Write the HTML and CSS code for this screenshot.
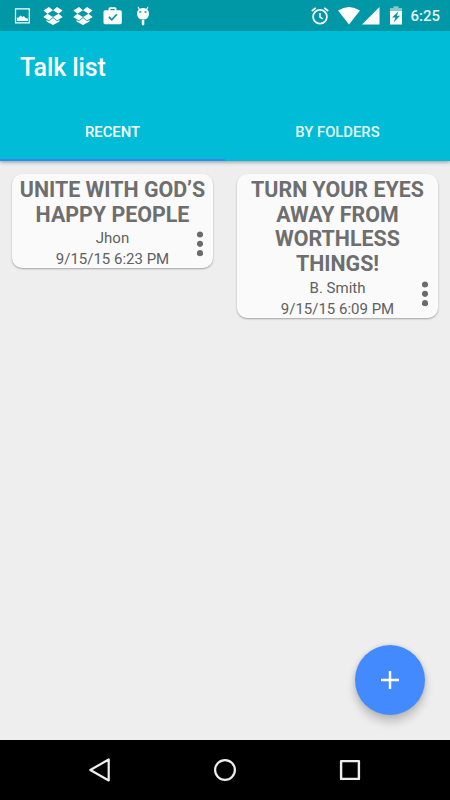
FILE: index.html
```html
<!DOCTYPE html>
<html lang="en">
<head>
<meta charset="utf-8">
<title>Talk list</title>
<link rel="stylesheet" href="styles.css">
</head>
<body>
<div class="screen">
  <div class="status">
    <div class="notifications">
      <svg width="16" height="16" viewBox="0 0 16 16"><path fill="none" stroke="#fff" stroke-width="1.2" d="M1.500.8h13.800v14H1.500z"/><path fill="#fff" d="M2.900 13V9.500L4.400 9.800l2-2.300L8.400 9l1.500-1 1.500 2 2.500.5V13z"/></svg>
      <svg width="20" height="20" viewBox="0 0 20 20"><path fill="#fff" d="M6 1l4 3.300L4.500 7.700.300 4.500zM14 1l5.700 3.500-4.200 3.200L10 4.300zM.300 11l4.200-3.300L10 11l-4 3.600zM19.700 11l-4.200-3.300L10 11l4 3.600zM10 12l4 3.300 2.500-1.200v1.500L10 19l-6.500-3.400v-1.500L6 15.300z"/></svg>
      <svg width="20" height="20" viewBox="0 0 20 20"><path fill="#fff" d="M6 1l4 3.300L4.500 7.700.300 4.500zM14 1l5.700 3.500-4.200 3.200L10 4.300zM.300 11l4.200-3.300L10 11l-4 3.600zM19.700 11l-4.200-3.300L10 11l4 3.600zM10 12l4 3.300 2.500-1.200v1.500L10 19l-6.500-3.400v-1.500L6 15.300z"/></svg>
      <svg width="20" height="18" viewBox="0 0 20 18"><path fill="#fff" fill-rule="evenodd" d="M5.500 3.200V1.700Q5.500.2 7 .2h5q1.500 0 1.500 1.500v1.500h3.700q1.600 0 1.600 1.600v10.800q0 1.600-1.600 1.600H2.100q-1.600 0-1.600-1.600V4.800q0-1.600 1.600-1.600zm2 0h4V1.900h-4z"/><path fill="none" stroke="#0097a7" stroke-width="1.700" d="M5.800 9.800l3 3 5-5.500"/></svg>
      <svg width="14" height="20" viewBox="0 0 14 20"><path fill="#fff" d="M2.200.5l1.500 2.300Q7 1.200 10.300 2.800L11.800.5l.6.400-1.100 2.500Q13.200 5 13 8q-.3 5.500-6 5.500T1 8q-.2-3 1.700-4.600L1.600.9zM5.800 14h2.500v4.500L7 19.800 5.800 18.500z"/><path stroke="#0097a7" stroke-width="1.300" d="M3.300 6h2M8.500 6h2"/></svg>
    </div>
    <div class="system">
      <svg class="alarm" width="18" height="18" viewBox="0 0 18 18" fill="none" stroke="#fff"><circle cx="9" cy="9.800" r="6.900" stroke-width="1.700"/><path stroke-width="1.500" d="M9 6v4l3 2"/><path stroke-width="1.700" d="M.8 4L4.800.8M13.200.8l4 3.200"/></svg>
      <svg class="wifi" width="22" height="18" viewBox="0 0 22 18"><path fill="#fff" d="M0 3.500Q11-3.500 22 3.500L11 17.500z"/></svg>
      <svg class="cell" width="18" height="18" viewBox="0 0 18 18"><path fill="#fff" d="M17.500 0v17.500H0z"/></svg>
      <svg class="battery" width="12" height="19" viewBox="0 0 12 19"><path fill="#80cbd3" d="M3.500.3h5v1.700H12v3H0V2h3.500z"/><path fill="#fff" d="M0 5h12v13.500H0z"/><path fill="#0097a7" d="M8.500 5.200L2 11.500h3.500L3.600 16.500 10 9.800H6.800z"/></svg>
      <span class="clock">6:25</span>
    </div>
  </div>
  <header class="appbar">
    <h1>Talk list</h1>
    <nav class="tabs">
      <div class="tab active">RECENT</div>
      <div class="tab">BY FOLDERS</div>
    </nav>
  </header>
  <main class="content">
    <article class="card">
      <h2>UNITE WITH GOD’S HAPPY PEOPLE</h2>
      <p>Jhon</p>
      <p>9/15/15 6:23 PM</p>
      <svg class="more" width="6" height="26" viewBox="0 0 6 26" fill="#6b6b6b"><circle cx="3" cy="3.500" r="3.100"/><circle cx="3" cy="12.800" r="3.100"/><circle cx="3" cy="22.200" r="3.100"/></svg>
    </article>
    <article class="card">
      <h2>TURN YOUR EYES AWAY FROM WORTHLESS THINGS!</h2>
      <p>B. Smith</p>
      <p>9/15/15 6:09 PM</p>
      <svg class="more" width="6" height="26" viewBox="0 0 6 26" fill="#6b6b6b"><circle cx="3" cy="3.500" r="3.100"/><circle cx="3" cy="12.800" r="3.100"/><circle cx="3" cy="22.200" r="3.100"/></svg>
    </article>
    <div class="fab"><svg width="18" height="18" viewBox="0 0 18 18"><path fill="#fff" d="M7.800 0h2.400v7.800H18v2.400h-7.800V18H7.800v-7.800H0V7.800h7.800z"/></svg></div>
  </main>
  <footer class="navbar">
    <svg width="26" height="26" viewBox="0 0 26 26"><path fill="none" stroke="#eee" stroke-width="2.200" stroke-linejoin="round" d="M21.700 2.500v21L3.300 13z"/></svg>
    <svg width="26" height="26" viewBox="0 0 26 26"><circle cx="13" cy="13" r="9.900" fill="none" stroke="#eee" stroke-width="2.200"/></svg>
    <svg width="26" height="26" viewBox="0 0 26 26"><path fill="none" stroke="#eee" stroke-width="2.400" stroke-linejoin="round" d="M4.100 4.100h17.800v17.800H4.100z"/></svg>
  </footer>
</div>
</body>
</html>
```
FILE: styles.css
```css
* {
  box-sizing: border-box;
}

body {
  margin: 0;
  font-family: Roboto, "Liberation Sans", sans-serif;
}

svg {
  display: block;
  flex: none;
}

.screen {
  display: flex;
  flex-direction: column;
  width: 450px;
  height: 800px;
  overflow: hidden;
  background: #eee;
}

.status {
  z-index: 2;
  display: flex;
  flex: none;
  align-items: center;
  justify-content: space-between;
  height: 31px;
  padding: 0 10px 0 14px;
  background: #0097a7;
}

.notifications {
  display: flex;
  align-items: center;
  gap: 10px;
}

.notifications svg:first-child {
  margin-right: 2.500px;
}

.notifications svg:last-child {
  margin-left: 3px;
}

.system {
  display: flex;
  align-items: center;
}

.alarm {
  margin-right: 1px;
}

.wifi {
  margin-left: 8px;
}

.cell {
  margin-left: 2px;
}

.battery {
  margin-left: 10px;
}

.clock {
  width: 30px;
  margin-left: 8px;
  padding-top: 1px;
  color: #fff;
  font-size: 15px;
  font-weight: 500;
  line-height: 20px;
  text-align: right;
  opacity: .9;
}

.appbar {
  z-index: 1;
  display: flex;
  flex: none;
  flex-direction: column;
  height: 130px;
  background: #00bcd7;
  box-shadow: 0 1px 4px rgba(0, 0, 0, .4);
}

h1 {
  margin: 0;
  padding: 1px 0 0 20px;
  color: #fff;
  font-size: 25px;
  font-weight: 500;
  letter-spacing: -.1px;
  line-height: 72px;
}

.tabs {
  display: flex;
  flex: 1;
}

.tab {
  width: 50%;
  padding-top: 18px;
  color: #e9fafc;
  font-size: 14.800px;
  font-weight: 500;
  line-height: 20px;
  text-align: center;
}

.tab.active {
  border-bottom: 2px solid #2c8af5;
  color: #fff;
}

.content {
  position: relative;
  display: grid;
  flex: 1;
  grid-template-columns: 201px 201px;
  gap: 24px;
  align-items: start;
  padding: 13.400px 12px;
}

.card {
  position: relative;
  padding: 3.600px 6px 0;
  border-radius: 10px;
  background: #fafafa;
  box-shadow: 0 1px 2px rgba(0, 0, 0, .32);
  color: #606060;
  text-align: center;
}

h2 {
  margin: 0 0 .8px;
  color: #6e6e6e;
  font-size: 21.400px;
  font-weight: 700;
  line-height: 24.700px;
}

.card p {
  margin: 0;
  font-size: 15px;
  line-height: 21px;
}

.card p:last-of-type {
  margin-bottom: -2px;
}

.more {
  position: absolute;
  right: 10px;
  bottom: 11px;
}

.fab {
  position: absolute;
  right: 25px;
  bottom: 25px;
  display: flex;
  align-items: center;
  justify-content: center;
  width: 70px;
  height: 70px;
  border-radius: 50%;
  background: #448aff;
  box-shadow: 0 7px 10px rgba(0, 0, 0, .2), 0 0 5px rgba(0, 0, 0, .12);
}

.navbar {
  display: flex;
  flex: none;
  align-items: center;
  justify-content: center;
  gap: 99px;
  height: 60px;
  background: #000;
}
```
